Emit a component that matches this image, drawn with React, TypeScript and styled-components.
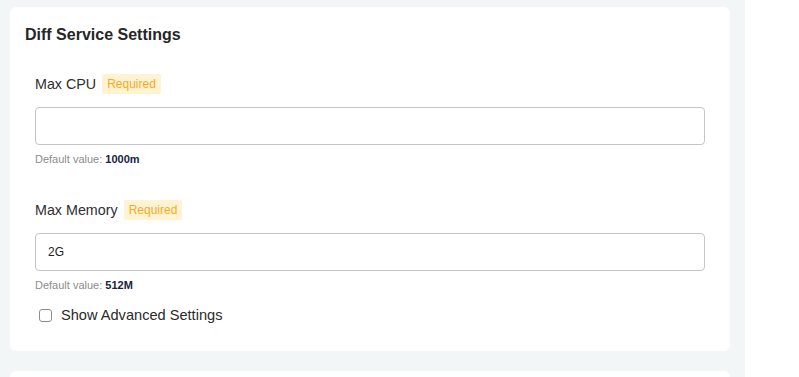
import React, {useState} from 'react';
import styled, {createGlobalStyle} from 'styled-components';

const GlobalStyle = createGlobalStyle`
    html, body {
        margin: 0;
        padding: 0;
        background: #ffffff;
        font-family: "Liberation Sans", Arial, sans-serif;
    }
`;

const Page = styled.div`
    width: 745px;
    height: 377px;
    background: #f3f6f7;
    padding: 7px 15px 0 10px;
    box-sizing: border-box;
    overflow: hidden;
    display: flex;
    flex-direction: column;
    gap: 20px;
`;

const Card = styled.section`
    background: #ffffff;
    border-radius: 6px;
    padding: 18px 15px 26px 15px;
    flex-shrink: 0;
`;

const Title = styled.h2`
    margin: 0 0 29px 0;
    font-size: 16px;
    line-height: 20px;
    font-weight: bold;
    color: #262626;
`;

const Fields = styled.div`
    padding: 0 10px;
    display: flex;
    flex-direction: column;
`;

const Field = styled.div`
    display: flex;
    flex-direction: column;
    margin-bottom: ${(props: {last?: boolean}) => (props.last ? '12px' : '33px')};
`;

const LabelRow = styled.label`
    display: flex;
    align-items: center;
    gap: 6px;
    height: 20px;
    font-size: 14.3px;
    color: #2e2e2e;
    margin-bottom: 13px;
`;

const Badge = styled.span`
    background: #fff3d4;
    color: #f5aa22;
    font-size: 12px;
    line-height: 20px;
    padding: 0 5px;
    border-radius: 2px;
`;

const Input = styled.input`
    height: 38px;
    box-sizing: border-box;
    border: 1px solid #c6c6c6;
    border-radius: 4px;
    padding: 0 12px;
    font-family: "Liberation Sans", Arial, sans-serif;
    font-size: 12px;
    color: #222;
    outline: none;
    width: 100%;
`;

const Help = styled.div`
    margin-top: 6px;
    font-size: 11px;
    line-height: 16px;
    color: #8c8c8c;

    b {
        color: #18233f;
        font-weight: bold;
    }
`;

const CheckRow = styled.label`
    display: flex;
    align-items: center;
    height: 20px;
    font-size: 14.6px;
    color: #2a2a2a;
    cursor: pointer;
`;

const Check = styled.input`
    appearance: none;
    width: 13px;
    height: 13px;
    box-sizing: border-box;
    border: 1px solid #8d8d8d;
    border-radius: 3px;
    background: #fff;
    margin: 0 9px 0 4px;

    &:checked {
        background: #1b6ef3;
        border-color: #1b6ef3;
    }
`;

const NextCard = styled.section`
    background: #ffffff;
    border-radius: 6px;
    height: 40px;
    flex-shrink: 0;
`;

export default function App() {
    const [cpu, setCpu] = useState('');
    const [memory, setMemory] = useState('2G');
    const [advanced, setAdvanced] = useState(false);

    return (
        <>
            <GlobalStyle/>
            <Page>
                <Card>
                    <Title>Diff Service Settings</Title>
                    <Fields>
                        <Field>
                            <LabelRow htmlFor="maxCpu">Max CPU <Badge>Required</Badge></LabelRow>
                            <Input id="maxCpu" value={cpu} onChange={(e) => setCpu(e.target.value)}/>
                            <Help>Default value: <b>1000m</b></Help>
                        </Field>
                        <Field last>
                            <LabelRow htmlFor="maxMemory">Max Memory <Badge>Required</Badge></LabelRow>
                            <Input id="maxMemory" value={memory} onChange={(e) => setMemory(e.target.value)}/>
                            <Help>Default value: <b>512M</b></Help>
                        </Field>
                        <CheckRow>
                            <Check type="checkbox" checked={advanced} onChange={(e) => setAdvanced(e.target.checked)}/>
                            Show Advanced Settings
                        </CheckRow>
                    </Fields>
                </Card>
                <NextCard/>
            </Page>
        </>
    );
}
